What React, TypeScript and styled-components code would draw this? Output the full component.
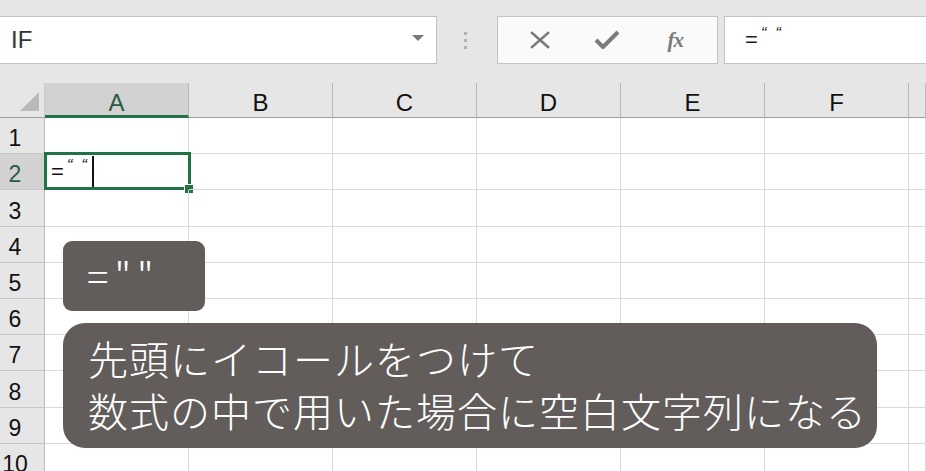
import React from "react";
import styled, { createGlobalStyle } from "styled-components";

const GlobalStyle = createGlobalStyle`
  html, body { margin: 0; padding: 0; background: #ffffff; overflow: hidden; }
  * { box-sizing: border-box; }
`;

const Root = styled.div`
  position: relative;
  width: 926px;
  height: 471px;
  overflow: hidden;
  background: #ffffff;
  font-family: "Liberation Sans", "Noto Sans CJK JP", sans-serif;
`;

const TopBar = styled.div`
  height: 83px;
  background: #e6e6e6;
  display: flex;
  align-items: flex-start;
  padding-top: 16px;
`;

const NameBox = styled.div`
  width: 437px;
  height: 48px;
  background: #ffffff;
  border: 1px solid #c3c3c3;
  border-left: none;
  display: flex;
  align-items: center;
  justify-content: space-between;
  padding: 0 12px 0 11px;
  font-size: 24px;
  color: #333333;
`;

const DropArrow = styled.span`
  width: 0;
  height: 0;
  border-left: 6px solid transparent;
  border-right: 6px solid transparent;
  border-top: 6px solid #7a7a7a;
  margin-top: -4px;
`;

const Grip = styled.div`
  width: 60px;
  height: 48px;
  display: flex;
  flex-direction: column;
  align-items: center;
  justify-content: center;
  gap: 4px;
  padding-right: 4px;
`;

const GripDot = styled.span`
  width: 3px;
  height: 3px;
  background: #b3b3b3;
`;

const FxButtons = styled.div`
  width: 221px;
  height: 48px;
  background: #fafafa;
  border: 1px solid #c3c3c3;
  display: flex;
  align-items: center;
  justify-content: space-around;
  padding: 0 8px;
`;

const IconSlot = styled.span`
  width: 40px;
  display: flex;
  align-items: center;
  justify-content: center;
  color: #7a7a7a;
`;

const FxText = styled.span`
  font-family: "Liberation Serif", serif;
  font-style: italic;
  font-weight: bold;
  font-size: 21px;
  color: #7a7a7a;
  letter-spacing: -1px;
`;

const FormulaInput = styled.div`
  flex: 1;
  height: 48px;
  margin-left: 6px;
  background: #ffffff;
  border: 1px solid #c3c3c3;
  border-right: none;
  display: flex;
  align-items: center;
  padding-left: 20px;
  font-size: 22px;
  color: #222222;
`;

const Quote = styled.span`
  font-size: 17px;
  font-style: italic;
  position: relative;
  top: -6px;
  margin-left: 3px;
  letter-spacing: 2px;
`;

const Sheet = styled.div`
  display: grid;
  grid-template-columns: 45px repeat(6, 144px) 1fr;
  grid-template-rows: 35px repeat(10, 36.2px);
`;

const Corner = styled.div`
  background: #e6e6e6;
  border-right: 1px solid #c8c8c8;
  border-bottom: 1px solid #9e9e9e;
  display: flex;
  align-items: flex-end;
  justify-content: flex-end;
  padding: 0 5px 6px 0;
`;

const CornerTri = styled.span`
  width: 0;
  height: 0;
  border-left: 19px solid transparent;
  border-bottom: 19px solid #b9b9b9;
`;

const ColHead = styled.div<{ $active?: boolean }>`
  background: ${(p) => (p.$active ? "#d2d2d2" : "#e6e6e6")};
  border-right: 1px solid #b9b9b9;
  border-bottom: ${(p) => (p.$active ? "3px solid #217346" : "1px solid #9e9e9e")};
  display: flex;
  justify-content: center;
  align-items: center;
  padding-top: ${(p) => (p.$active ? "7px" : "5px")};
  font-size: 24px;
  color: ${(p) => (p.$active ? "#2b5a43" : "#111111")};
`;

const RowHead = styled.div<{ $active?: boolean }>`
  background: ${(p) => (p.$active ? "#d2d2d2" : "#e6e6e6")};
  border-right: 1px solid #b9b9b9;
  border-bottom: 1px solid #c8c8c8;
  display: flex;
  align-items: flex-end;
  justify-content: center;
  padding: 0 14px 3px 0;
  font-size: 23px;
  line-height: 1;
  color: ${(p) => (p.$active ? "#2b5a43" : "#111111")};
`;

const Cell = styled.div<{ $selected?: boolean }>`
  position: relative;
  border-right: 1px solid #d9d9d9;
  border-bottom: 1px solid #d9d9d9;
  display: flex;
  align-items: stretch;
  font-size: 22px;
  color: #111111;
  ${(p) =>
    p.$selected &&
    `
    &::before {
      content: "";
      position: absolute;
      left: -1px;
      top: -2px;
      right: -3px;
      bottom: -1px;
      border: 3px solid #217346;
      pointer-events: none;
    }
    &::after {
      content: "";
      position: absolute;
      right: -5px;
      bottom: -4px;
      width: 8px;
      height: 8px;
      background: #217346;
      border-left: 1px solid #fff;
      border-top: 1px solid #fff;
    }
  `}
`;

const CellText = styled.span`
  display: flex;
  align-items: center;
  padding-left: 6px;
  padding-right: 3px;
  border-right: 2px solid #111111;
  margin: 2px 0 2px 0;
`;

const Callout = styled.div<{ $radius: number }>`
  position: absolute;
  background: rgba(86, 81, 78, 0.93);
  color: #ffffff;
  border-radius: ${(p) => p.$radius}px;
  font-family: "Noto Sans CJK JP", "Liberation Sans", sans-serif;
  font-weight: 300;
  font-size: 40px;
  line-height: 52px;
  white-space: nowrap;
`;

const SmallCallout = styled(Callout)`
  left: 63px;
  top: 241px;
  width: 142px;
  height: 70px;
  padding: 8px 0 0 24px;
  letter-spacing: 6px;
`;

const BigCallout = styled(Callout)`
  left: 63px;
  top: 323px;
  width: 814px;
  height: 125px;
  padding: 9px 0 0 25px;
  letter-spacing: 1px;
`;

const cols = ["A", "B", "C", "D", "E", "F", ""];

const XIcon = () => (
  <svg width="22" height="18" viewBox="0 0 22 18">
    <path d="M3 2 L19 16 M19 2 L3 16" stroke="#7a7a7a" strokeWidth="2.6" strokeLinecap="square" fill="none" />
  </svg>
);

const CheckIcon = () => (
  <svg width="26" height="20" viewBox="0 0 26 20">
    <path d="M2 10 L9 17 L24 2" stroke="#7a7a7a" strokeWidth="4" strokeLinejoin="round" fill="none" />
  </svg>
);

export default function App() {
  const rows = Array.from({ length: 10 }, (_, i) => i + 1);
  return (
    <Root>
      <GlobalStyle />
      <TopBar>
        <NameBox>
          <span>IF</span>
          <DropArrow />
        </NameBox>
        <Grip>
          <GripDot />
          <GripDot />
          <GripDot />
        </Grip>
        <FxButtons>
          <IconSlot>
            <XIcon />
          </IconSlot>
          <IconSlot>
            <CheckIcon />
          </IconSlot>
          <IconSlot>
            <FxText>fx</FxText>
          </IconSlot>
        </FxButtons>
        <FormulaInput>
          =<Quote>“ “</Quote>
        </FormulaInput>
      </TopBar>
      <Sheet>
        <Corner>
          <CornerTri />
        </Corner>
        {cols.map((c, i) => (
          <ColHead key={"h" + i} $active={c === "A"}>
            {c}
          </ColHead>
        ))}
        {rows.map((r) => (
          <React.Fragment key={r}>
            <RowHead $active={r === 2}>{r}</RowHead>
            {cols.map((c, i) => {
              const sel = r === 2 && c === "A";
              return (
                <Cell key={r + "-" + i} $selected={sel}>
                  {sel && (
                    <CellText>
                      =<Quote>“ “</Quote>
                    </CellText>
                  )}
                </Cell>
              );
            })}
          </React.Fragment>
        ))}
      </Sheet>
      <SmallCallout $radius={9}>=""</SmallCallout>
      <BigCallout $radius={22}>
        先頭にイコールをつけて
        <br />
        数式の中で用いた場合に空白文字列になる
      </BigCallout>
    </Root>
  );
}
